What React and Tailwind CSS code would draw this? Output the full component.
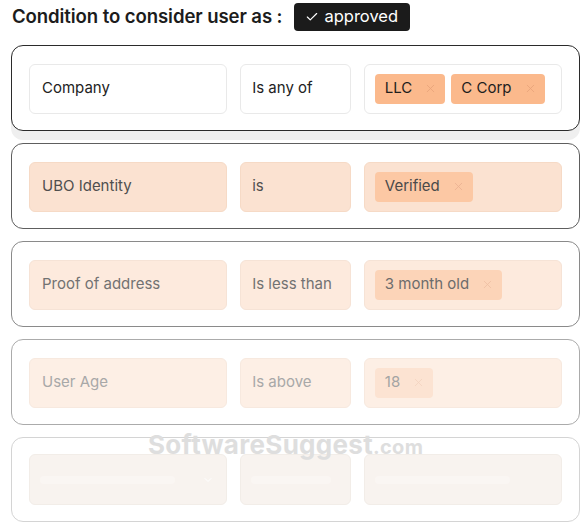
import { Check, X, ChevronDown } from 'lucide-react';

const rules = [
  {
    field: 'Company',
    op: 'Is any of',
    values: ['LLC', 'C Corp'],
    card: 'border-[#2b2b2b] shadow-[0_9px_0_0_#efefef]',
    box: 'bg-white border-[#e9e9e9]',
    chip: 'bg-[#fbb98c] text-[#1e1e1e]',
    x: 'text-[#e8a37a]',
    text: 'text-[#222]',
  },
  {
    field: 'UBO Identity',
    op: 'is',
    values: ['Verified'],
    card: 'border-[#5e5e5e]',
    box: 'bg-[#fbe2d1] border-[#f6dac6]',
    chip: 'bg-[#fcc8a4] text-[#4a4a4a]',
    x: 'text-[#eab091]',
    text: 'text-[#4f4f4f]',
  },
  {
    field: 'Proof of address',
    op: 'Is less than',
    values: ['3 month old'],
    card: 'border-[#8a8a8a]',
    box: 'bg-[#fdeadd] border-[#f6e3d6]',
    chip: 'bg-[#fcd4b8] text-[#6c6c6c]',
    x: 'text-[#eebfa2]',
    text: 'text-[#727272]',
  },
  {
    field: 'User Age',
    op: 'Is above',
    values: ['18'],
    card: 'border-[#ababab]',
    box: 'bg-[#fdefe5] border-[#f7e9df]',
    chip: 'bg-[#fce3d2] text-[#a3a3a3]',
    x: 'text-[#f3d3bf]',
    text: 'text-[#a8a8a8]',
  },
];

const Chip = ({ label, chip, x }) => (
  <span className={`h-[30px] pl-[10px] pr-[8px] rounded-[4px] flex items-center gap-[12px] text-[15px] ${chip}`}>
    {label}
    <X size={13} strokeWidth={1.5} className={x} />
  </span>
);

const RuleRow = ({ rule }) => (
  <div className={`ml-[11px] w-[569px] h-[86px] rounded-[12px] border bg-white flex items-center gap-[13px] px-[17px] pt-[1px] ${rule.card}`}>
    <div className={`w-[199px] h-[50px] rounded-[6px] border flex items-center px-[12px] text-[15px] ${rule.box} ${rule.text}`}>
      {rule.field}
    </div>
    <div className={`w-[111px] h-[50px] rounded-[6px] border flex items-center px-[11px] text-[15px] ${rule.box} ${rule.text}`}>
      {rule.op}
    </div>
    <div className={`w-[199px] h-[50px] rounded-[6px] border flex items-center gap-[6px] px-[10px] ${rule.box}`}>
      {rule.values.map((v) => (
        <Chip key={v} label={v} chip={rule.chip} x={rule.x} />
      ))}
    </div>
  </div>
);

// empty placeholder row, faded out at the bottom of the list
const EmptyRow = () => (
  <div className="ml-[11px] w-[569px] h-[85px] rounded-[12px] border border-[#d4d4d4] bg-white flex items-center gap-[13px] px-[17px]">
    <div className="w-[199px] h-[51px] rounded-[6px] border border-[#f2ede8] bg-[#f8f3ef] flex items-center justify-between pl-[10px] pr-[12px]">
      <div className="w-[135px] h-[8px] rounded-full bg-[#faf6f3]" />
      <ChevronDown size={12} className="text-white" />
    </div>
    <div className="w-[111px] h-[51px] rounded-[6px] border border-[#f2ede8] bg-[#f8f3ef] flex items-center px-[10px]">
      <div className="w-[80px] h-[8px] rounded-full bg-[#faf6f3]" />
    </div>
    <div className="w-[199px] h-[51px] rounded-[6px] border border-[#f2ede8] bg-[#f8f3ef] flex items-center px-[10px]">
      <div className="w-[135px] h-[8px] rounded-full bg-[#faf6f3]" />
    </div>
  </div>
);

export default function App() {
  return (
    <div className="relative w-[580px] h-[523px] bg-white overflow-hidden" style={{ fontFamily: 'Inter, "Noto Sans", sans-serif' }}>
      <div className="flex items-center h-[32px] pt-[1px]">
        <h1 className="ml-[12px] text-[18.6px] font-semibold text-[#1c1c1c] tracking-[-0.1px]">
          Condition to consider user as :
        </h1>
        <span className="ml-[12px] h-[28px] pl-[11px] pr-[12px] rounded-[4px] bg-[#1b1b1b] text-white text-[16.5px] flex items-center gap-[5px]">
          <Check size={14} strokeWidth={2} />
          approved
        </span>
      </div>

      <div className="mt-[13px] flex flex-col gap-[12px]">
        {rules.map((r) => (
          <RuleRow key={r.field} rule={r} />
        ))}
        <EmptyRow />
      </div>

      <div className="absolute left-[148px] top-[425px] text-[26px] font-bold text-[#dedede] tracking-[0.3px] pointer-events-none">
        SoftwareSuggest<span className="text-[20px]">.com</span>
      </div>
    </div>
  );
}
